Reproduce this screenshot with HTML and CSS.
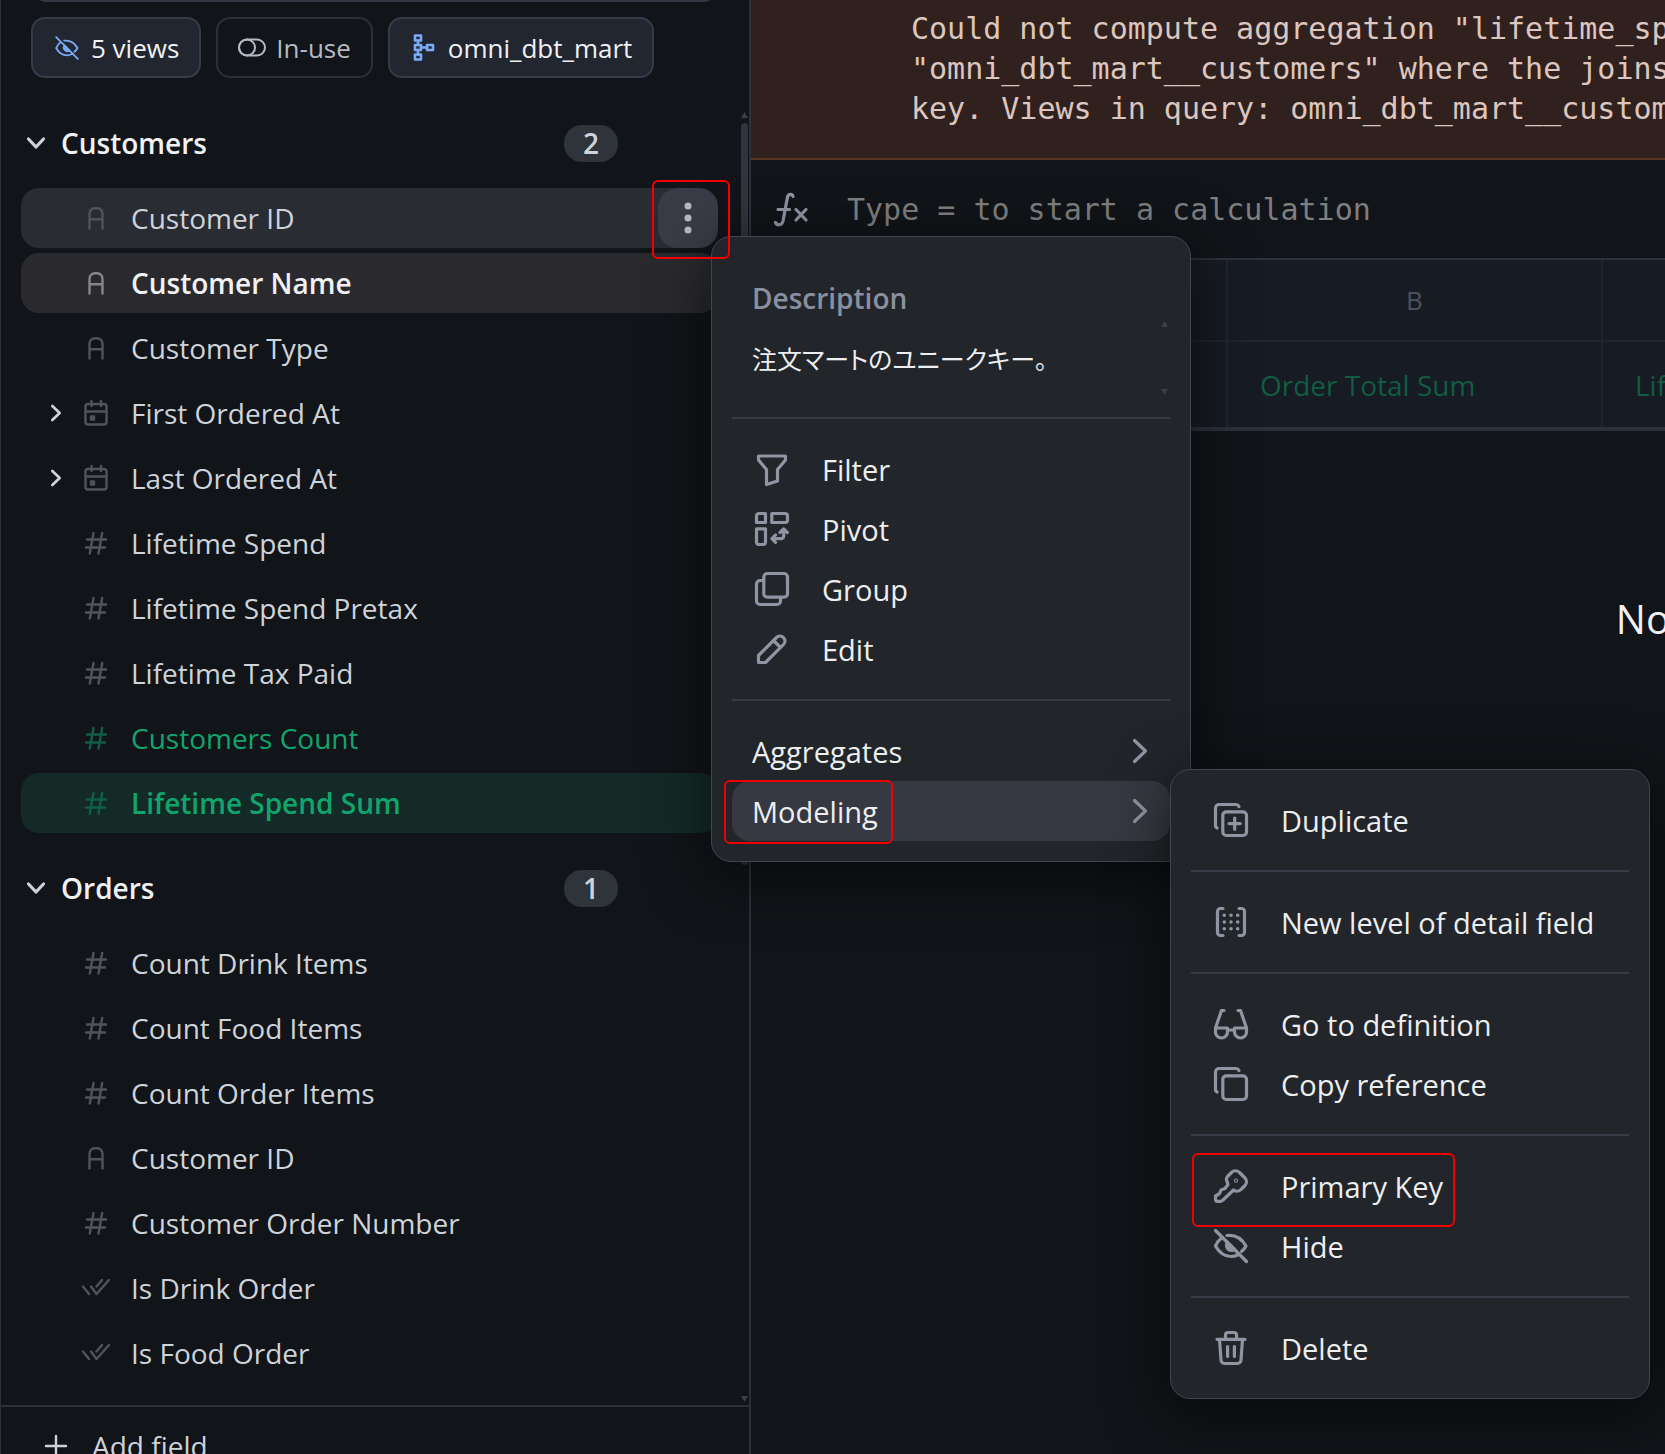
FILE: index.html
```html
<!DOCTYPE html>
<html lang="en">
<head>
    <meta charset="UTF-8">
    <meta name="viewport" content="width=device-width, initial-scale=1.0">
    <title>Workbook</title>
    <link rel="stylesheet" href="styles.css">
</head>
<body>
    <svg class="sprite" aria-hidden="true">
        <symbol id="i-text" viewBox="0 0 32 32"><path d="M9.5 26.5V12A5.5 5.5 0 0 1 15 6.2h2a5.5 5.5 0 0 1 5.5 5.8v14.5M9.5 17.3h13"/></symbol>
        <symbol id="i-number" viewBox="0 0 32 32"><path d="M13.5 6L9.8 26.5M22.2 6l-3.7 20.5M7 12.5h19M6 20.5h19"/></symbol>
        <symbol id="i-date" viewBox="0 0 32 32"><rect x="5.5" y="7" width="21" height="20.5" rx="2.5"/><path d="M5.5 14.5h21M11.5 4v5M21 4v5"/><rect x="11" y="19.5" width="3" height="3"/></symbol>
        <symbol id="i-bool" viewBox="0 0 32 32"><path d="M3 14.5l6 7.5M11 14.5l5.5 7.5L29 8M16.5 14.5L22 8"/></symbol>
        <symbol id="i-right" viewBox="0 0 20 30"><path d="M4.5 4.5L15.5 15l-11 10.5"/></symbol>
        <symbol id="i-copy" viewBox="0 0 40 40"><rect x="11.8" y="11.8" width="23.7" height="23.7" rx="3.5"/><path d="M28 6.5a3.5 3.5 0 0 0-3-2H8A3.5 3.5 0 0 0 4.5 8v17a3 3 0 0 0 1.5 3"/></symbol>
        <symbol id="i-hide" viewBox="0 0 40 40"><path d="M4.5 4.5l31 31M16 9.5c8.5-1 15 3.5 19 10.5-1 2-2.500 3.800-4.500 5.500M10.500 12C8 14 6 16.500 4.500 20c4 7 9.500 10.500 15.500 10.500 2.500 0 4.500-.5 6.500-1.500"/><path d="M16.500 16.500a5 5 0 0 0 7 7z" fill="currentColor"/></symbol>
    </svg>

    <div class="app">
        <aside class="sidebar">
            <div class="sidebar-top">
                <input class="search" type="search" aria-label="Search fields">
                <div class="chips">
                    <button class="chip active">
                        <svg class="chip-icon"><use href="#i-hide"/></svg>
                        5 views
                    </button>
                    <button class="chip">
                        <svg class="chip-icon thin" viewBox="0 0 28 28"><rect x="1" y="5.5" width="26" height="16" rx="8"/><circle cx="9" cy="13.5" r="8"/></svg>
                        In-use
                    </button>
                    <button class="chip active">
                        <svg class="chip-icon" viewBox="0 0 28 28"><rect x="5" y="1.5" width="6" height="5"/><rect x="5" y="11" width="6" height="5"/><rect x="5" y="20.5" width="6" height="5"/><rect x="17" y="11" width="6" height="5"/><path d="M8 6.5V11M8 16v4.5M11 13.5h6"/></svg>
                        omni_dbt_mart
                    </button>
                </div>
            </div>

            <div class="field-area">
                <div class="field-list">
                    <section class="view">
                        <button class="view-header">
                            <svg class="caret" viewBox="0 0 24 24"><path d="M4.5 8l7.500 8 7.500-8"/></svg>
                            <span class="view-name">Customers</span>
                            <span class="badge">2</span>
                        </button>
                        <ul class="fields">
                            <li class="field hover"><span class="expander"></span><svg class="type"><use href="#i-text"/></svg>Customer ID
                                <button class="more" aria-label="Field options">
                                    <svg viewBox="0 0 60 60"><circle cx="30" cy="18" r="3.5"/><circle cx="30" cy="30" r="3.5"/><circle cx="30" cy="42" r="3.5"/></svg>
                                    <span class="marker marker-more"></span>
                                </button>
                            </li>
                            <li class="field selected"><span class="expander"></span><svg class="type"><use href="#i-text"/></svg>Customer Name</li>
                            <li class="field"><span class="expander"></span><svg class="type"><use href="#i-text"/></svg>Customer Type</li>
                            <li class="field"><svg class="expander"><use href="#i-right"/></svg><svg class="type"><use href="#i-date"/></svg>First Ordered At</li>
                            <li class="field"><svg class="expander"><use href="#i-right"/></svg><svg class="type"><use href="#i-date"/></svg>Last Ordered At</li>
                            <li class="field"><span class="expander"></span><svg class="type"><use href="#i-number"/></svg>Lifetime Spend</li>
                            <li class="field"><span class="expander"></span><svg class="type"><use href="#i-number"/></svg>Lifetime Spend Pretax</li>
                            <li class="field"><span class="expander"></span><svg class="type"><use href="#i-number"/></svg>Lifetime Tax Paid</li>
                            <li class="field measure"><span class="expander"></span><svg class="type"><use href="#i-number"/></svg>Customers Count</li>
                            <li class="field measure selected"><span class="expander"></span><svg class="type"><use href="#i-number"/></svg>Lifetime Spend Sum</li>
                        </ul>
                    </section>
                    <section class="view">
                        <button class="view-header">
                            <svg class="caret" viewBox="0 0 24 24"><path d="M4.5 8l7.500 8 7.500-8"/></svg>
                            <span class="view-name">Orders</span>
                            <span class="badge">1</span>
                        </button>
                        <ul class="fields">
                            <li class="field"><span class="expander"></span><svg class="type"><use href="#i-number"/></svg>Count Drink Items</li>
                            <li class="field"><span class="expander"></span><svg class="type"><use href="#i-number"/></svg>Count Food Items</li>
                            <li class="field"><span class="expander"></span><svg class="type"><use href="#i-number"/></svg>Count Order Items</li>
                            <li class="field"><span class="expander"></span><svg class="type"><use href="#i-text"/></svg>Customer ID</li>
                            <li class="field"><span class="expander"></span><svg class="type"><use href="#i-number"/></svg>Customer Order Number</li>
                            <li class="field"><span class="expander"></span><svg class="type"><use href="#i-bool"/></svg>Is Drink Order</li>
                            <li class="field"><span class="expander"></span><svg class="type"><use href="#i-bool"/></svg>Is Food Order</li>
                        </ul>
                    </section>
                </div>
                <div class="scrollbar">
                    <span class="arrow up"></span>
                    <span class="thumb"></span>
                    <span class="arrow down"></span>
                </div>
            </div>

            <button class="add-field">
                <svg class="plus" viewBox="0 0 24 24"><path d="M12 2v20M2 12h20"/></svg>
                Add field
            </button>
        </aside>

        <main class="main">
            <div class="error">
                <p>Could not compute aggregation "lifetime_spend_sum" on view</p>
                <p>"omni_dbt_mart__customers" where the joins require a primary</p>
                <p>key. Views in query: omni_dbt_mart__customers, omni_dbt_mart__orders</p>
            </div>
            <div class="formula">
                <svg class="fx" viewBox="0 0 36 36"><path d="M20 5.5c-.5-3-4.500-3-5.500.5L10 30c-1 4.500-6 5-7.500 1.500M5 18.500h11.500M23 18.500l10 10.500M33 18.500L23 29"/></svg>
                <input type="text" aria-label="Formula" placeholder="Type = to start a calculation">
            </div>
            <div class="sheet">
                <table>
                    <thead>
                        <tr class="letters">
                            <th class="row-number"></th>
                            <th></th>
                            <th>B</th>
                            <th></th>
                        </tr>
                        <tr class="names">
                            <th class="row-number"></th>
                            <th></th>
                            <th class="measure">Order Total Sum</th>
                            <th class="measure">Lifetime Spend Sum</th>
                        </tr>
                    </thead>
                </table>
                <p class="empty">No results</p>
            </div>
        </main>
    </div>

    <div class="menu field-menu">
        <div class="description">
            <h2>Description</h2>
            <div class="description-body">
                <p lang="ja">注文マートのユニークキー。</p>
                <div class="description-scroll">
                    <span class="arrow up"></span>
                    <span class="arrow down"></span>
                </div>
            </div>
        </div>
        <hr>
        <button class="item"><svg class="icon" viewBox="0 0 40 40"><path d="M6.5 7h27v4l-8 9.5V32l-11 3.5v-15L6.5 11z"/></svg>Filter</button>
        <button class="item"><svg class="icon" viewBox="0 0 40 40"><path d="M7 4.5h6.5v9h-9V7A2.500 2.500 0 0 1 7 4.500zM19.800 4.500H33A2.500 2.500 0 0 1 35.500 7v4a2.500 2.500 0 0 1-2.500 2.500H19.800zM4.500 19.800h9V33a2.500 2.500 0 0 1-2.500 2.500H7A2.500 2.500 0 0 1 4.500 33zM20.500 29.700H29a2.700 2.700 0 0 0 2.700-2.700v-6.500M23.500 26l-3.500 3.700 3.500 3.600M28 23.500l3.700-3.500 3.600 3.500"/></svg>Pivot</button>
        <button class="item"><svg class="icon" viewBox="0 0 40 40"><rect x="11.8" y="4.5" width="23.7" height="23.7" rx="3.5"/><path d="M11.5 11.5H8A3.5 3.5 0 0 0 4.5 15v17A3.5 3.5 0 0 0 8 35.5h17a3.5 3.5 0 0 0 3.5-3.5v-3.5"/></svg>Group</button>
        <button class="item"><svg class="icon" viewBox="0 0 40 40"><path d="M6.5 33.5v-7l18-18a4.950 4.950 0 0 1 7 7l-18 18zM21.500 11.500l7 7"/></svg>Edit</button>
        <hr>
        <button class="item">Aggregates<svg class="chevron"><use href="#i-right"/></svg></button>
        <div class="submenu-anchor">
            <button class="item open">Modeling<svg class="chevron"><use href="#i-right"/></svg></button>
            <span class="marker marker-modeling"></span>

            <div class="menu modeling-menu">
                <button class="item"><svg class="icon" viewBox="0 0 40 40"><use href="#i-copy"/><path d="M23.7 18v11.3M18 23.6h11.3"/></svg>Duplicate</button>
                <hr>
                <button class="item"><svg class="icon" viewBox="0 0 40 40"><path d="M12 6.5H9.5a3 3 0 0 0-3 3v21a3 3 0 0 0 3 3H12M28 6.5h2.5a3 3 0 0 1 3 3v21a3 3 0 0 1-3 3H28"/><path class="dots" d="M13.3 13.3h0M20 13.3h0M26.7 13.3h0M13.3 20h0M20 20h0M26.7 20h0M13.3 26.7h0M20 26.7h0M26.7 26.7h0"/></svg>New level of detail field</button>
                <hr>
                <button class="item"><svg class="icon" viewBox="0 0 40 40"><path d="M13 6.5h-2.5L4.5 24v4a6 6 0 0 0 12 0v-4h-12M27 6.5h2.5l6 17.5v4a6 6 0 0 1-12 0v-4h12M16.5 26h7"/></svg>Go to definition</button>
                <button class="item"><svg class="icon"><use href="#i-copy"/></svg>Copy reference</button>
                <hr>
                <div class="key-row">
                    <button class="item"><svg class="icon" viewBox="0 0 40 40"><path d="M20.5 6.5a5.5 5.5 0 0 1 8 0l5.5 5.5a5.5 5.5 0 0 1 0 7.5l-4 4a5.5 5.5 0 0 1-7.5.5L12 34a3.5 3.5 0 0 1-2.5 1.3h-3a2 2 0 0 1-2-2V30l4-2.3 1.5-3.7 4-1.5 3-4-1.5-4.5a4 4 0 0 1 1-3.500z"/><circle cx="25" cy="14.7" r="0.5"/></svg>Primary Key</button>
                    <span class="marker marker-key"></span>
                </div>
                <button class="item"><svg class="icon"><use href="#i-hide"/></svg>Hide</button>
                <hr>
                <button class="item"><svg class="icon" viewBox="0 0 40 40"><path d="M6 11.3h28M14.5 11V7A2.5 2.5 0 0 1 17 4.5h6A2.5 2.5 0 0 1 25.5 7v4M8.5 11.5L10 32a3.5 3.5 0 0 0 3.5 3.5h13A3.5 3.5 0 0 0 30 32l1.5-20.5M16.6 18.5v10M23.4 18.5v10"/></svg>Delete</button>
            </div>
        </div>
    </div>
</body>
</html>
```
FILE: styles.css
```css
* {
    box-sizing: border-box;
}
body {
    margin: 0;
    height: 100vh;
    overflow: hidden;
    position: relative;
    background: #111418;
    color: #ced3da;
    font-family: "Open Sans", "Noto Sans", sans-serif;
    font-size: 28px;
}
button, input {
    font: inherit;
    color: inherit;
    background: none;
    border: none;
    margin: 0;
    padding: 0;
}
button {
    cursor: pointer;
    text-align: left;
}
p, h2, ul {
    margin: 0;
    padding: 0;
}
svg {
    fill: none;
    stroke: currentColor;
    stroke-width: 3.2;
    stroke-linecap: round;
    stroke-linejoin: round;
    flex: none;
}
.sprite {
    display: none;
}
.app {
    display: flex;
    height: 100%;
}

/* sidebar */
.sidebar {
    flex: none;
    width: 751px;
    border-left: 1px solid #2b303b;
    border-right: 2px solid #2b303b;
}
.sidebar-top {
    padding: 0 30px 20px;
}
.search {
    display: block;
    width: 100%;
    height: 60px;
    margin-top: -58px;
    border: 2px solid #343a45;
    border-radius: 16px;
}
.chips {
    display: flex;
    gap: 15px;
    margin-top: 15px;
}
.chip {
    display: flex;
    align-items: center;
    gap: 10px;
    height: 61px;
    padding: 0 20px;
    border: 2px solid #2b2f39;
    border-radius: 14px;
    color: #b4bac6;
    font-size: 26px;
}
.chip.active {
    background: #222630;
    border-color: #353b47;
    color: #f0f1f3;
}
.chip-icon {
    width: 28px;
    height: 28px;
    color: #7aacf5;
    stroke-width: 2.6;
}
.chip-icon.thin {
    color: #b4bac6;
    stroke-width: 2;
}
.field-area {
    display: flex;
    padding-right: 1px;
    border-bottom: 2px solid #2b303b;
}
.field-list {
    flex: 1;
    padding: 0 23px 22px 20px;
}
.view + .view {
    margin-top: 10px;
}
.view-header {
    display: flex;
    align-items: center;
    gap: 13px;
    width: 100%;
    height: 90px;
    padding: 0 100px 0 3px;
    color: #f0f1f3;
    font-weight: 600;
}
.caret {
    width: 24px;
    height: 24px;
    color: #ced3da;
}
.view-name {
    flex: 1;
}
.badge {
    height: 37px;
    padding: 0 19px;
    border-radius: 18px;
    background: #2f343a;
    color: #ced3da;
    line-height: 37px;
}
.fields {
    display: flex;
    flex-direction: column;
    gap: 5px;
    list-style: none;
}
.field {
    display: flex;
    align-items: center;
    height: 60px;
    padding-left: 25px;
    border-radius: 18px;
}
.expander {
    width: 20px;
    height: 20px;
    margin-right: 14px;
    stroke-width: 4;
}
.type {
    width: 32px;
    height: 32px;
    margin-right: 19px;
    color: #4f535c;
    stroke-width: 2.4;
}
.field.hover {
    background: #2a2c33;
}
.field.selected {
    background: #2a2a2e;
    color: #f0f1f3;
    font-weight: 600;
}
.field.selected .type {
    color: #86878b;
}
.field.measure {
    color: #10a56c;
}
.field.measure .type {
    color: #105f44;
}
.field.measure.selected {
    background: #132a26;
}
.more {
    position: relative;
    width: 60px;
    height: 60px;
    margin-left: auto;
    border-radius: 20px;
    background: #3a3b46;
    color: #b4bac6;
}
.more svg {
    display: block;
    fill: currentColor;
    stroke: none;
}
.scrollbar {
    display: flex;
    flex-direction: column;
    width: 7px;
    padding: 14px 0 3px;
}
.arrow {
    width: 7px;
    height: 6px;
    background: #3a3f48;
}
.arrow.up {
    clip-path: polygon(50% 0, 100% 100%, 0 100%);
}
.arrow.down {
    margin-top: auto;
    clip-path: polygon(0 0, 100% 0, 50% 100%);
}
.thumb {
    height: 57.5%;
    margin-top: 5px;
    border-radius: 4px;
    background: #2f343e;
}
.add-field {
    display: flex;
    align-items: center;
    gap: 24px;
    width: 100%;
    padding: 20px 43px;
}
.plus {
    width: 24px;
    height: 24px;
    stroke-width: 2.4;
}

/* main */
.main {
    flex: 1;
    min-width: 0;
    overflow: hidden;
}
.error {
    padding: 9px 0 29px 160px;
    border-bottom: 2px solid #5a3326;
    background: #30211e;
    color: #dcc6bf;
    font-family: "DejaVu Sans Mono", monospace;
    font-size: 30px;
    line-height: 40px;
    white-space: nowrap;
}
.formula {
    display: flex;
    align-items: center;
    gap: 38px;
    height: 98px;
    padding-left: 22px;
}
.fx {
    width: 36px;
    height: 36px;
    color: #8f95a3;
}
.formula input {
    flex: 1;
    height: 60px;
    outline: none;
    font-family: "DejaVu Sans Mono", monospace;
    font-size: 30px;
}
.formula input::placeholder {
    color: #7f7f7f;
    opacity: 1;
}
.sheet {
    width: 1920px;
}
table {
    width: 1227px;
    table-layout: fixed;
    border-collapse: separate;
    border-spacing: 0;
    border-top: 2px solid #2b303b;
    border-bottom: 4px solid #2b303b;
    background: #171b23;
}
th {
    border-right: 2px solid #1f242d;
    font-weight: 400;
}
.row-number {
    width: 102px;
}
.letters th {
    height: 82px;
    padding: 0;
    border-bottom: 2px solid #1f242d;
    color: #4d525c;
    font-size: 26px;
}
.names th {
    height: 85px;
    padding: 0 0 0 32px;
    text-align: left;
    white-space: nowrap;
}
.names .measure {
    color: #115c42;
}
.empty {
    padding-top: 160px;
    color: #f0f1f3;
    font-size: 40px;
    line-height: 56px;
    text-align: center;
}

/* menus */
.menu {
    position: absolute;
    width: 480px;
    padding: 20px;
    border: 1px solid #414552;
    border-radius: 20px;
    background: #22252a;
    box-shadow: 0 12px 60px rgba(0, 0, 0, 0.6);
    color: #eceef0;
    font-size: 29px;
}
.field-menu {
    left: 711px;
    top: 236px;
}
.submenu-anchor, .key-row {
    position: relative;
}
.modeling-menu {
    left: 438px;
    top: -12px;
}
.menu hr {
    height: 2px;
    margin: 20px 0;
    border: none;
    background: #363c46;
}
.description {
    padding: 20px 2px 0 20px;
}
.description h2 {
    color: #8a90a0;
    font-size: 28px;
    font-weight: 600;
    line-height: 42px;
}
.description-body {
    display: flex;
    justify-content: space-between;
    align-items: center;
    height: 78px;
}
.description-body p {
    font-family: "Open Sans", "Noto Sans CJK JP", sans-serif;
    font-size: 25px;
    font-feature-settings: "palt";
}
.description-scroll {
    display: flex;
    flex-direction: column;
    align-self: stretch;
    padding: 2px 0;
}
.item {
    display: flex;
    align-items: center;
    gap: 30px;
    width: 100%;
    height: 60px;
    padding: 0 20px;
    border-radius: 18px;
}
.item.open {
    background: #373942;
}
.icon {
    width: 40px;
    height: 40px;
    color: #8f95a3;
}
.icon .dots {
    stroke-width: 3.6;
}
.chevron {
    width: 20px;
    height: 30px;
    margin-left: auto;
    color: #8f95a3;
}

/* red callouts */
.marker {
    position: absolute;
    z-index: 2;
    border: 2px solid #f00000;
    border-radius: 6px;
    pointer-events: none;
}
.marker-more {
    inset: -8px -12px -11px -6px;
}
.marker-modeling {
    left: -8px;
    top: -1px;
    width: 169px;
    height: 64px;
}
.marker-key {
    left: 1px;
    top: -3px;
    width: 263px;
    height: 74px;
}
```
